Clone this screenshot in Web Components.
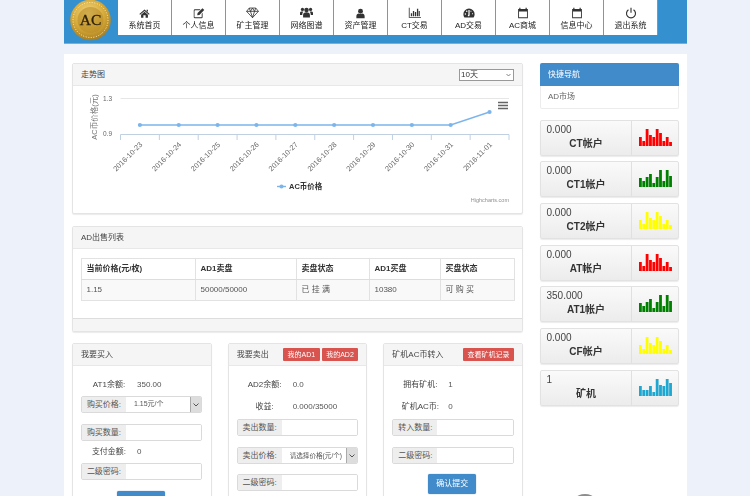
<!DOCTYPE html>
<html lang="zh"><head><meta charset="utf-8"><title>AC</title>
<style>
html,body{margin:0;padding:0;height:496px;overflow:hidden;background:#edf2fa;}
body{font:8px/1.2 "Liberation Sans","Noto Sans CJK SC",sans-serif;color:#555;}
</style></head>
<body>
<app-page>
  <app-header slot="header">
    <nav-item label="系统首页" icon="home"></nav-item>
    <nav-item label="个人信息" icon="edit"></nav-item>
    <nav-item label="矿主管理" icon="diamond"></nav-item>
    <nav-item label="网络图谱" icon="group"></nav-item>
    <nav-item label="资产管理" icon="user"></nav-item>
    <nav-item label="CT交易" icon="bars"></nav-item>
    <nav-item label="AD交易" icon="dash"></nav-item>
    <nav-item label="AC商城" icon="cal"></nav-item>
    <nav-item label="信息中心" icon="cal"></nav-item>
    <nav-item label="退出系统" icon="power"></nav-item>
  </app-header>

  <panel-box slot="chart" title="走势图" style="height:151px">
    <range-select slot="tools"></range-select>
    <trend-chart></trend-chart>
  </panel-box>

  <panel-box slot="table" title="AD出售列表" footer style="height:106px">
    <market-table></market-table>
  </panel-box>

  <panel-box slot="forms" title="我要买入" clip>
    <form-stack>
      <info-row label="AT1余额:" value="350.00"></info-row>
      <field-row label="购买价格:" select="1.15元/个" size="7"></field-row>
      <field-row label="购买数量:" style="margin-top:11px"></field-row>
      <info-row label="支付金额:" value="0"></info-row>
      <field-row label="二级密码:"></field-row>
      <blue-btn style="margin:11px 0 0 36px"></blue-btn>
    </form-stack>
  </panel-box>

  <panel-box slot="forms" title="我要卖出" clip>
    <red-btn slot="tools">我的AD1</red-btn>
    <red-btn slot="tools">我的AD2</red-btn>
    <form-stack>
      <info-row label="AD2余额:" value="0.0"></info-row>
      <info-row label="收益:" value="0.000/35000"></info-row>
      <field-row label="卖出数量:" style="margin-top:1px"></field-row>
      <field-row label="卖出价格:" select="请选择价格(元/个)" size="6.6" style="margin-top:11px"></field-row>
      <field-row label="二级密码:" style="margin-top:10px"></field-row>
    </form-stack>
  </panel-box>

  <panel-box slot="forms" title="矿机AC币转入" clip>
    <red-btn slot="tools">查看矿机记录</red-btn>
    <form-stack>
      <info-row label="拥有矿机:" value="1"></info-row>
      <info-row label="矿机AC币:" value="0"></info-row>
      <field-row label="转入数量:" style="margin-top:1px"></field-row>
      <field-row label="二级密码:" style="margin-top:11px"></field-row>
      <blue-btn style="margin:10px 0 0 36px">确认提交</blue-btn>
    </form-stack>
  </panel-box>

  <quick-nav slot="side"></quick-nav>
  <stat-card slot="side" value="0.000" name="CT帐户" color="#ff0000" bars="9,5,17,11,9,17,13,5,9,4"></stat-card>
  <stat-card slot="side" value="0.000" name="CT1帐户" color="#008000" bars="9,6,10,13,4,10,17,6,17,11"></stat-card>
  <stat-card slot="side" value="0.000" name="CT2帐户" color="#ffff00" bars="9,5,17,11,9,17,13,5,9,4"></stat-card>
  <stat-card slot="side" value="0.000" name="AT帐户" color="#ff0000" bars="9,5,17,11,9,17,13,5,9,4"></stat-card>
  <stat-card slot="side" value="350.000" name="AT1帐户" color="#008000" bars="9,6,10,13,4,10,17,6,17,11"></stat-card>
  <stat-card slot="side" value="0.000" name="CF帐户" color="#ffff00" bars="9,5,17,11,9,17,13,5,9,4"></stat-card>
  <stat-card slot="side" value="1" name="矿机" color="#1ea7d0" bars="10,6,6,10,4,17,11,10,17,13"></stat-card>
</app-page>

<script>
const def=(n,html)=>{customElements.define(n,class extends HTMLElement{
  constructor(){super();this.attachShadow({mode:'open'});}
  connectedCallback(){this.shadowRoot.innerHTML=typeof html==='function'?html(this):html;}
});};

def('app-page',`<style>
:host{display:block;width:623px;margin-left:64px;position:relative;height:496px;overflow:hidden;filter:blur(.3px)}
.main{background:#fff;margin-top:10px;padding:9px 8px 0;display:grid;grid-template-columns:451px 139px;column-gap:17px;height:442px;box-sizing:border-box;overflow:hidden;align-items:start}
.left{display:flex;flex-direction:column}
.forms{display:grid;grid-template-columns:repeat(3,1fr);column-gap:16px;margin-top:11px}
.table{margin-top:12px;display:block}
.side{display:flex;flex-direction:column}
.top{position:absolute;left:505px;top:494px;width:32px;height:32px;border-radius:50%;background:#8d8d8d}
</style>
<slot name="header"></slot>
<div class="main">
  <div class="left">
    <slot name="chart"></slot>
    <div class="table"><slot name="table"></slot></div>
    <div class="forms"><slot name="forms"></slot></div>
  </div>
  <div class="side"><slot name="side"></slot></div>
</div>
<div class="top"></div>`);

const LOGO=`<svg width="42" height="41" viewBox="0 0 42 41" aria-hidden="true">
<defs><radialGradient id="g" cx="45%" cy="35%" r="70%"><stop offset="0" stop-color="#f5dc88"/><stop offset=".55" stop-color="#d6aa3a"/><stop offset="1" stop-color="#a27518"/></radialGradient></defs>
<circle cx="20.5" cy="20" r="20.3" fill="url(#g)"/>
<circle cx="20.5" cy="20" r="17.5" fill="none" stroke="#fff3c4" stroke-width="1" stroke-dasharray="1 1.6"/>
<circle cx="20.5" cy="20" r="13" fill="#b98c28" opacity=".6"/>
<text x="20.5" y="25" text-anchor="middle" font-family="Liberation Serif,serif" font-size="15.5" fill="#2e2108" stroke="#2e2108" stroke-width=".3">AC</text>
</svg>`;

def('app-header',`<style>
:host{display:flex;height:43px;background:#3590d0;border-bottom:1px solid #6fb2e0;box-sizing:content-box}
.logo{width:54px;flex:none;padding-left:6px;box-sizing:border-box;overflow:hidden;height:41px}
.nav{display:flex;height:35px;align-items:stretch}
</style><div class="logo">${LOGO}</div><div class="nav"><slot></slot></div>`);

const ICONS={
home:[11,`<path d="M8 2 15.5 8.6 14.4 9.8 8 4.2 1.6 9.8.5 8.6zM11 2.6h2v3.2l-2-1.8zM8 5.4l5 4.4V14H9.6v-3.4H6.4V14H3V9.8z"/>`],
edit:[12,`<path d="M2.5 3H10L8.8 4.2H2.8a.8.8 0 0 0-.8.8v8a.8.8 0 0 0 .8.8h8a.8.8 0 0 0 .8-.8V9l1.2-1.2V13.5A1.5 1.5 0 0 1 11.3 15H2.5A1.5 1.5 0 0 1 1 13.5v-9A1.5 1.5 0 0 1 2.5 3z"/><path d="M12.6 1.6 15 4 8.5 10.5 5.6 11 6.1 8.1z"/>`],
diamond:[13,`<path fill="none" stroke="#333" stroke-width="1" d="M4 2.5h8L15.3 6.6 8 14.4.7 6.6zM.7 6.6h14.6M4 2.5 5.5 6.6 8 14.4 10.5 6.6 12 2.5M5.5 6.6 8 2.5l2.5 4.1"/>`],
group:[13,`<circle cx="8" cy="5" r="2.8"/><circle cx="3" cy="4.2" r="2"/><circle cx="13" cy="4.2" r="2"/><path d="M3.8 14V11c0-2 1.4-3.2 4.2-3.2s4.2 1.2 4.2 3.2v3zM0 11V8.5C0 7.3 1 6.8 3 6.8c.5 0 .9 0 1.2.2-.9.7-1.4 1.8-1.4 3.1V11zM16 11V8.5c0-1.2-1-1.7-3-1.7-.5 0-.9 0-1.2.2.9.7 1.4 1.8 1.4 3.1V11z"/>`],
user:[11,`<circle cx="8" cy="4.6" r="3.6"/><path d="M2 15v-3c0-2.4 1.6-4 3.6-4 .7.6 1.5.9 2.4.9s1.7-.3 2.4-.9c2 0 3.6 1.6 3.6 4v3z"/>`],
bars:[13,`<path d="M1 2h1v11.5h14v1H1z"/><path d="M3.5 9h1.6v3.5H3.5zM6 6h1.6v6.5H6zM8.5 7.5h1.6v5H8.5zM11 3.5h1.6v9H11zM13.2 6h1.3v6.5h-1.3z"/>`],
dash:[12,`<path fill-rule="evenodd" d="M8 2a7.5 7.5 0 0 1 7.5 7.5c0 1.7-.5 3.2-1.4 4.5H1.9A7.5 7.5 0 0 1 .5 9.5 7.5 7.5 0 0 1 8 2zM3.2 8.4a1 1 0 1 0 0 2 1 1 0 0 0 0-2zM5 4.7a1 1 0 1 0 0 2 1 1 0 0 0 0-2zM8.8 3.9H7.2v6l-.9 1.7 1.7 1 .9-1.7z"/><path fill="#fff" d="M10 5h1.2v1.2H10zM12 8.4h1.2v1.2H12z"/>`],
cal:[12,`<path fill-rule="evenodd" d="M3 1h1.6v1.6h6.8V1H13v1.6h1.5V15h-13V2.6H3zM2.7 6v7.8h10.6V6z"/>`],
power:[12,`<path fill="none" stroke="#333" stroke-width="1.5" d="M4.6 3.6a6 6 0 1 0 6.8 0M8 1v6.5"/>`]};

def('nav-item',h=>{const[i,p]=ICONS[h.getAttribute('icon')];return `<style>
:host{display:block;width:54px;box-sizing:border-box;background:#fff;border-right:1px solid #7f97a8;text-align:center;color:#222}
.i{height:20px;display:flex;align-items:flex-end;justify-content:center;padding-bottom:1px;box-sizing:border-box}
svg{display:block;fill:#333}
.t{font-size:8px;line-height:12px}
</style><div class="i"><svg width="${i}" height="${i}" viewBox="0 0 16 16">${p}</svg></div><div class="t">${h.getAttribute('label')}</div>`});

def('panel-box',h=>`<style>
:host{display:flex;flex-direction:column;background:#fff;border:1px solid #e4e4e4;border-radius:2px;box-shadow:0 1px 1px rgba(0,0,0,.08);box-sizing:border-box;${h.hasAttribute('clip')?'height:170px;':''}overflow:hidden}
.h{height:22px;flex:none;background:#f5f5f5;border-bottom:1px solid #e8e8e8;box-sizing:border-box;display:flex;align-items:center;justify-content:space-between;padding:0 8px;color:#444;font-size:8px}
.tools{display:flex;gap:2px}
.b{flex:1;min-height:0}
.f{height:13px;flex:none;background:#f5f5f5;border-top:1px solid #ddd;box-sizing:border-box}
</style><div class="h"><span>${h.getAttribute('title')}</span><span class="tools"><slot name="tools"></slot></span></div>
<div class="b"><slot></slot></div>${h.hasAttribute('footer')?'<div class="f"></div>':''}`);

def('range-select',`<style>:host{display:block;position:relative;width:55px;height:12px}
select{display:block;appearance:none;-webkit-appearance:none;width:55px;height:12px;font:8px "Liberation Sans","Noto Sans CJK SC",sans-serif;color:#333;padding:0 0 0 1px;margin:0;border:1px solid #999;background:#fff;border-radius:0;box-sizing:border-box}
svg{position:absolute;right:3px;top:4px;pointer-events:none}
</style><select><option>10天</option><option>30天</option></select><svg width="5" height="4" viewBox="0 0 5 4"><path d="M.5 1 2.5 3 4.5 1" fill="none" stroke="#666" stroke-width=".8"/></svg>`);

const labels=['2016-10-23','2016-10-24','2016-10-25','2016-10-26','2016-10-27','2016-10-28','2016-10-29','2016-10-30','2016-10-31','2016-11-01'];
def('trend-chart',()=>{
  const F='font-family="Liberation Sans,Noto Sans CJK SC,sans-serif"';
  let ticks='',txt='',dots='',pts=[];
  for(let k=0;k<11;k++){const x=120.5+38.85*k;ticks+=`<path d="M${x} 135.5V141" stroke="#c0d0e0"/>`;}
  labels.forEach((l,k)=>{const x=139.9+38.85*k,y=k==9?113:126;pts.push(x+','+y);
    dots+=`<circle cx="${x}" cy="${y}" r="2.1" fill="#7cb5ec"/>`;
    txt+=`<text x="${x+3}" y="${146}" transform="rotate(-45 ${x+3} 146)" text-anchor="end" font-size="7.4" fill="#666" ${F}>${l}</text>`;});
  return `<style>:host{display:block}svg{display:block}</style>
<svg width="449" height="127" viewBox="73 87 449 127">
<path d="M120.5 99.5H509" stroke="#e6e6e6"/><path d="M120.5 135.5H509" stroke="#c0d0e0"/>${ticks}
<polyline points="${pts.join(' ')}" fill="none" stroke="#7cb5ec" stroke-width="1.4"/>${dots}${txt}
<text x="103" y="102" font-size="6.5" fill="#666" ${F}>1.3</text><text x="103" y="137" font-size="6.5" fill="#666" ${F}>0.9</text>
<text x="97" y="118" transform="rotate(-90 97 118)" text-anchor="middle" font-size="7.5" fill="#777" ${F}>AC币价格(元)</text>
<path d="M498 103.5h10M498 106.5h10M498 109.5h10" stroke="#666" stroke-width="1.5"/>
<path d="M277 187.5h9" stroke="#7cb5ec" stroke-width="1.4"/><circle cx="281.5" cy="187.5" r="2.1" fill="#7cb5ec"/>
<text x="289" y="190" font-size="7.5" font-weight="700" fill="#333" ${F}>AC币价格</text>
<text x="509" y="203" text-anchor="end" font-size="5.5" fill="#909090" ${F}>Highcharts.com</text>
</svg>`});

def('market-table',`<style>:host{display:block;padding:8.5px 8px 0}
table{border-collapse:collapse;width:433px;table-layout:fixed;font-size:8px}
td,th{border:1px solid #e2e2e2;padding:0 4.5px;text-align:left;height:21px;box-sizing:border-box;color:#555}
th{color:#333;font-weight:700;border-bottom:1.5px solid #ddd}
tr+tr td{background:#f9f9f9}
</style><table><colgroup><col style="width:114px"><col style="width:101px"><col style="width:73px"><col style="width:71px"><col style="width:74px"></colgroup>
<tr><th>当前价格(元/枚)</th><th>AD1卖盘</th><th>卖盘状态</th><th>AD1买盘</th><th>买盘状态</th></tr>
<tr><td>1.15</td><td>50000/50000</td><td>已 挂 满</td><td>10380</td><td>可 购 买</td></tr></table>`);

def('form-stack',`<style>:host{display:block;padding:8px 8.5px 0 8px}</style><slot></slot>`);

def('info-row',h=>`<style>:host{display:flex;height:22px;align-items:center;font-size:8px;color:#444}
.l{width:56px;text-align:center}.v{color:#555;font-size:8px}</style>
<span class="l">${h.getAttribute('label')}</span><span class="v">${h.getAttribute('value')}</span>`);

def('field-row',h=>{const s=h.getAttribute('select');return `<style>
:host{display:flex;height:17px;border:1px solid #dadada;border-radius:2px;box-sizing:border-box;font-size:8px;overflow:hidden;background:#fff}
.l{width:44px;flex:none;background:#eee;display:flex;align-items:center;justify-content:center;color:#555}
.c{flex:1;display:flex;align-items:center;color:#555;min-width:0;white-space:nowrap;overflow:hidden}
.c span{flex:1;padding-left:8px;font-size:${h.getAttribute('size')||8}px}
.a{width:10px;flex:none;align-self:stretch;background:#ddd;border-left:1px solid #aaa;display:flex;align-items:center;justify-content:center}
input{flex:1;border:0;outline:0;min-width:0;height:100%;padding:0;background:#fff}
</style><span class="l">${h.getAttribute('label')}</span>${s?`<div class="c"><span>${s}</span><div class="a"><svg width="6" height="4" viewBox="0 0 6 4"><path d="M.5.5 3 3 5.5.5" fill="none" stroke="#555"/></svg></div></div>`:`<input type="text">`}`});

def('red-btn',`<style>:host{display:block;background:#d9534f;color:#fff;font-size:7px;line-height:13px;height:13px;padding:0 4.5px;border-radius:1px;white-space:nowrap}</style><slot></slot>`);
def('blue-btn',`<style>:host{display:block;width:48px;height:20px;line-height:20px;text-align:center;background:#428bca;border:0;border-radius:2px;color:#fff;font-size:8px;box-shadow:0 0 1px #357ebd}</style><slot></slot>`);

def('quick-nav',`<style>:host{display:block;border:1px solid #ececec;border-top:0;border-radius:2px;margin-bottom:10.5px;background:#fff}
.h{height:23px;margin:0 -1px;background:#428bca;color:#fff;display:flex;align-items:center;padding-left:8px;border-radius:2px 2px 0 0;font-size:8px}
.b{height:22px;display:flex;align-items:center;padding-left:7px;color:#666;font-size:8px}</style>
<div class="h">快捷导航</div><div class="b">AD市场</div>`);

def('stat-card',h=>{
 const c=h.getAttribute('color');
 const bars=h.getAttribute('bars').split(',').map((b,k)=>`<rect x="${k*3.35}" y="${17-b}" width="2.8" height="${b}" fill="${c}"/>`).join('');
 return `<style>
:host{display:flex;height:36px;margin-bottom:5.7px;border:1px solid #e2e2e2;border-radius:2px;box-sizing:border-box;background:linear-gradient(#fafafa,#ececec);box-shadow:0 1px 1px rgba(0,0,0,.08)}
.l{width:91px;flex:none;border-right:1px solid #e0e0e0;padding:3px 0 0 5.5px;box-sizing:border-box}
.v{font-size:10px;line-height:12px;color:#444}
.n{font-size:10px;line-height:14px;font-weight:700;color:#333;text-align:center;margin:1px 0 0 -5.5px}
.r{flex:1;display:flex;align-items:flex-end;padding:0 0 9px 6.5px}
svg{display:block}
</style><div class="l"><div class="v">${h.getAttribute('value')}</div><div class="n">${h.getAttribute('name')}</div></div><div class="r"><svg width="34" height="17" viewBox="0 0 34 17">${bars}</svg></div>`});
</script>
</body></html>
